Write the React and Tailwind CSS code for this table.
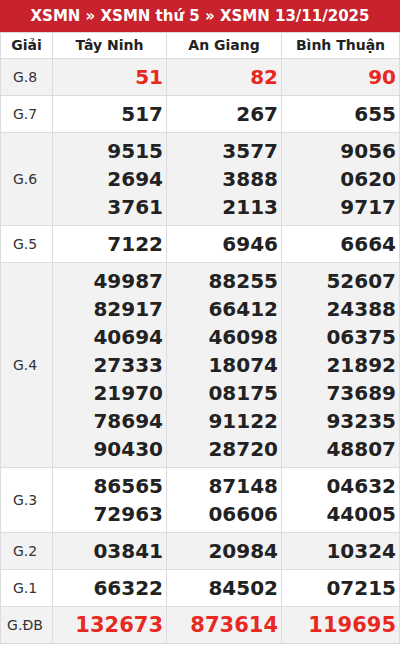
const provinces = ['Tây Ninh', 'An Giang', 'Bình Thuận']

const rows = [
  { label: 'G.8', red: true, values: [['51'], ['82'], ['90']] },
  { label: 'G.7', values: [['517'], ['267'], ['655']] },
  { label: 'G.6', values: [['9515', '2694', '3761'], ['3577', '3888', '2113'], ['9056', '0620', '9717']] },
  { label: 'G.5', values: [['7122'], ['6946'], ['6664']] },
  {
    label: 'G.4',
    values: [
      ['49987', '82917', '40694', '27333', '21970', '78694', '90430'],
      ['88255', '66412', '46098', '18074', '08175', '91122', '28720'],
      ['52607', '24388', '06375', '21892', '73689', '93235', '48807'],
    ],
  },
  { label: 'G.3', values: [['86565', '72963'], ['87148', '06606'], ['04632', '44005']] },
  { label: 'G.2', values: [['03841'], ['20984'], ['10324']] },
  { label: 'G.1', values: [['66322'], ['84502'], ['07215']] },
  { label: 'G.ĐB', red: true, big: true, values: [['132673'], ['873614'], ['119695']] },
]

export default function App() {
  return (
    <div className="w-[400px] bg-white font-['DejaVu_Sans',sans-serif] text-[#222]">
      {/* Title */}
      <div className="flex h-[32px] items-center justify-center bg-[#c8232c] text-[15px] font-bold text-white">
        XSMN » XSMN thứ 5 » XSMN 13/11/2025
      </div>

      <table className="w-full table-fixed border-collapse border border-[#dcdcdf]">
        <colgroup>
          <col className="w-[52px]" />
          <col className="w-[114px]" />
          <col className="w-[115px]" />
          <col />
        </colgroup>
        <thead>
          <tr>
            <th className="border border-[#dcdcdf] py-[4px] text-center text-[14px] leading-[17px] font-bold">Giải</th>
            {provinces.map(p => (
              <th key={p} className="border border-[#dcdcdf] py-[4px] text-center text-[14px] leading-[17px] font-bold">{p}</th>
            ))}
          </tr>
        </thead>
        <tbody>
          {rows.map((r, i) => (
            <tr key={r.label} className={i % 2 === 0 ? 'bg-[#f2f2f3]' : 'bg-white'}>
              <td className="border border-[#dcdcdf] pr-[3px] text-center text-[14px] text-[#333]">{r.label}</td>
              {r.values.map((col, j) => (
                <td key={j} className="border border-[#dcdcdf] py-[4px] pr-[3px] text-right align-middle">
                  {col.map(n => (
                    <div
                      key={n}
                      className={
                        'font-bold leading-[28px] ' +
                        (r.big ? 'text-[21px] ' : 'text-[20px] ') +
                        (r.red ? 'text-[#e8291f]' : 'text-[#222]')
                      }
                    >
                      {n}
                    </div>
                  ))}
                </td>
              ))}
            </tr>
          ))}
        </tbody>
      </table>
    </div>
  )
}
